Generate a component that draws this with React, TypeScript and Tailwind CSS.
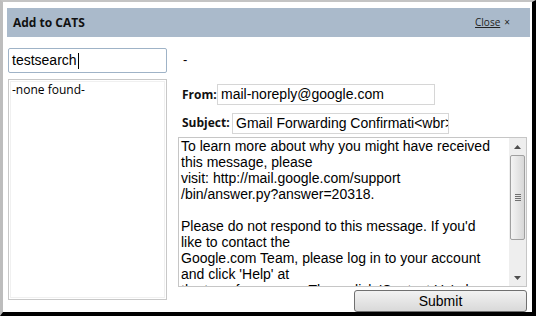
import React from "react";

const arial = { fontFamily: '"Liberation Sans", Arial, sans-serif' };
const segoe = { fontFamily: '"Open Sans", "Noto Sans", sans-serif' };

function Arrow({ up }: { up: boolean }) {
  return (
    <svg width="7" height="4" viewBox="0 0 7 4">
      {up ? <polygon points="0,4 7,4 3.5,0" fill="#4d4d4d" /> : <polygon points="0,0 7,0 3.5,4" fill="#4d4d4d" />}
    </svg>
  );
}

export default function App() {
  const lines = [
    "To learn more about why you might have received",
    "this message, please",
    "visit: http://mail.google.com/support",
    "/bin/answer.py?answer=20318.",
    "\u00a0",
    "Please do not respond to this message. If you'd",
    "like to contact the",
    "Google.com Team, please log in to your account",
    "and click 'Help' at",
    "the top of any page. Then, click 'Contact Us' along",
  ];
  return (
    <div className="w-[536px] h-[316px] bg-white border-l-[3px] border-t-[2px] border-r-[4px] border-b-[4px] border-l-[#bdbdbd] border-t-[#c4c4c4] border-r-black border-b-black pl-[4px] pt-[6px] pr-[2px] flex flex-col overflow-hidden">
      <div className="h-[29px] bg-[#aabacb] flex items-center justify-between pl-[6px] pr-[20px]">
        <span className="text-[12px] font-bold text-[#111]" style={segoe}>Add to CATS</span>
        <span className="flex items-center gap-[4px] text-[10px] text-[#222]" style={segoe}>
          <span className="underline">Close</span>
          <span className="text-[10px]">×</span>
        </span>
      </div>
      <div className="flex flex-row pt-[11px] pl-[1px]">
        <div className="w-[159px] flex flex-col">
          <div className="h-[25px] border border-[#9fb3c7] rounded-[2px] flex items-center pl-[3px] text-[14px] text-black" style={arial}>
            testsearch<span className="w-[1px] h-[16px] bg-black ml-[1px]" />
          </div>
          <div className="mt-[6px] h-[221px] border border-[#c8c8c8] p-[1px]">
            <div className="h-full border border-[#f0f0f0] pl-[1px] text-[12px] leading-[16px] text-black" style={segoe}>
              -none found-
            </div>
          </div>
        </div>
        <div className="ml-[11px] w-[349px] flex flex-col">
          <div className="h-[24px] flex items-center pl-[5px] text-[13px] text-black" style={arial}>-</div>
          <div className="mt-[12px] h-[21px] flex items-center pl-[4px]">
            <span className="text-[12px] font-bold text-[#111] w-[35px]" style={segoe}>From:</span>
            <div className="w-[218px] h-[21px] border border-[#d6d6d6] flex items-center pl-[3px] text-[14px] text-black" style={arial}>
              mail-noreply@google.com
            </div>
          </div>
          <div className="mt-[8px] h-[20px] flex items-center pl-[4px]">
            <span className="text-[12px] font-bold text-[#111] w-[50px]" style={segoe}>Subject:</span>
            <div className="w-[217px] h-[21px] border border-[#d6d6d6] flex items-center pl-[3px] text-[14px] text-black whitespace-nowrap overflow-hidden" style={arial}>
              Gmail Forwarding Confirmati&lt;wbr&gt;
            </div>
          </div>
          <div className="mt-[4px] h-[150px] border border-[#c6c6c6] flex flex-row overflow-hidden">
            <div className="flex-1 pl-[2px] overflow-hidden text-[14px] leading-[16px] text-black" style={arial}>
              {lines.map((l, i) => (
                <div key={i} className="whitespace-nowrap">{l}</div>
              ))}
            </div>
            <div className="w-[17px] h-full bg-[#eeeeee] flex flex-col">
              <div className="h-[17px] flex items-center justify-center"><Arrow up /></div>
              <div className="h-[85px] mx-[1px] border border-[#a0a0a0] rounded-[2px] bg-gradient-to-r from-[#f4f4f4] to-[#d8d8d8] flex flex-col items-center justify-center gap-[1px]">
                <div className="w-[6px] h-[1px] bg-[#707070]" />
                <div className="w-[6px] h-[1px] bg-[#707070]" />
                <div className="w-[6px] h-[1px] bg-[#707070]" />
                <div className="w-[6px] h-[1px] bg-[#707070]" />
              </div>
              <div className="flex-1" />
              <div className="h-[17px] flex items-center justify-center"><Arrow up={false} /></div>
            </div>
          </div>
          <div className="mt-[3px] flex justify-end">
            <button className="w-[173px] h-[22px] border border-[#707070] rounded-[3px] bg-gradient-to-b from-[#f2f2f2] to-[#d9d9d9] text-[14px] text-black flex items-center justify-center" style={arial}>
              Submit
            </button>
          </div>
        </div>
      </div>
    </div>
  );
}
